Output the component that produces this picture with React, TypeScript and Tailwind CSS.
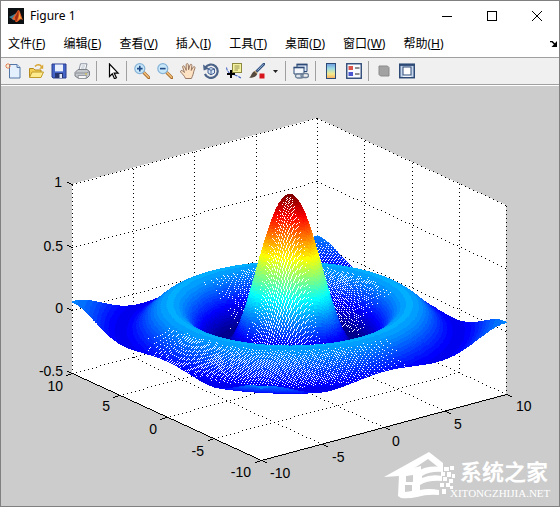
import React from "react";

const menus = [
  { label: "文件", key: "F" },
  { label: "编辑", key: "E" },
  { label: "查看", key: "V" },
  { label: "插入", key: "I" },
  { label: "工具", key: "T" },
  { label: "桌面", key: "D" },
  { label: "窗口", key: "W" },
  { label: "帮助", key: "H" },
];

/* ---------- toolbar icons, all on a 16x16 grid ---------- */

const NewIcon = () => (
  <>
    <path d="M4.5 1.5h7.5l3 3v10.5H4.5z" fill="#e4f0fd" stroke="#5577a8" />
    <path d="M12 1.5v3h3" fill="#cfe0f4" stroke="#5577a8" />
    <path d="M3 0v6M0 3h6M1 1l4 4M5 1L1 5" stroke="#e0703c" strokeWidth="0.9" />
    <circle cx="3" cy="3" r="1.2" fill="#fff3d0" />
  </>
);

const OpenIcon = () => (
  <>
    <path d="M1.5 14V5.5h4l1.5 1.5h6V14z" fill="#f3cf56" stroke="#b48a1c" />
    <path d="M1.5 14.5L4 9h11.5l-2.5 5.5z" fill="#fdeb8e" stroke="#c09a2a" />
    <path d="M7 3.5c2-2.3 5-2.3 6.500 0" fill="none" stroke="#d8a530" strokeWidth="1.5" />
    <path d="M15.2 1.5v4.200h-4z" fill="#d8a530" />
  </>
);

const SaveIcon = () => (
  <>
    <path d="M1 1h14v14H2l-1-1z" fill="#4564c8" stroke="#283d8c" />
    <rect x="4" y="1.5" width="8" height="6.5" fill="#e9f0fc" />
    <path d="M4 8.5h8" stroke="#7f9be0" />
    <rect x="4" y="10" width="8" height="5" fill="#27356f" />
    <rect x="8.5" y="11" width="2.5" height="4" fill="#dfe6f5" />
  </>
);

const PrintIcon = () => (
  <>
    <path d="M5 7L6.5 .8h6.500L11.5 7z" fill="#fff" stroke="#7d8694" strokeWidth="0.9" />
    <path d="M7.5 3h3.500M7 5h3.500" stroke="#9aa6b8" strokeWidth="0.8" />
    <path d="M1 9.500L4 6.500h9l2.500 2v4L13 15H4l-3-2z" fill="#c4c7cc" stroke="#7b7f86" />
    <path d="M1.5 10h11.500l2-1.500" fill="none" stroke="#8c9096" />
    <path d="M4 12.500h8.500l-.5 3H4.500z" fill="#f6f6f6" stroke="#85898f" strokeWidth="0.8" />
    <rect x="11" y="10.5" width="2" height="1" fill="#d8c23c" />
  </>
);

const PointerIcon = () => (
  <path
    d="M5.5 1v12.500l2.800-2.700 2.200 4.900 1.900-.9-2.200-4.700h3.900z"
    fill="#fff"
    stroke="#000"
    strokeWidth="1.2"
  />
);

const Magnifier = ({ plus }: { plus?: boolean }) => (
  <>
    <path d="M9.800 9.600l5 5" stroke="#a4692a" strokeWidth="3" strokeLinecap="round" />
    <path d="M9.800 9.400l4.800 4.800" stroke="#f0bd78" strokeWidth="1.6" strokeLinecap="round" />
    <circle cx="5.8" cy="5.6" r="5" fill="#c8e8fa" stroke="#86b2d6" strokeWidth="1.2" />
    <path d={plus ? "M3 5.600h5.600M5.800 2.800v5.600" : "M3 5.600h5.600"} stroke="#1f4a86" strokeWidth="1.6" />
  </>
);

const HandIcon = () => (
  <path
    d="M5.5 15.500C4.500 13 2.500 11 .6 9c-.5-1.400 1-2 2-1.100l1.900 1.600L2.600 4c0-1.400 1.600-1.600 2-.4l1.600 3.800L6.200 1.600c.2-1.400 1.900-1.300 2.100 0l.3 5.200L10 2c.5-1.200 2.100-.8 1.900.5l-.7 5 2-3.400c.8-1 2.100-.3 1.800.8-.9 2.300-1.500 4.400-1.900 6.400-.3 1.400-1 2.500-1.700 4.200z"
    fill="#fde3c4"
    stroke="#8e6c58"
    strokeWidth="0.9"
  />
);

const RotateIcon = () => (
  <>
    <path d="M2.300 4.700A6.700 6.700 0 1 1 1.900 11" fill="none" stroke="#4b6389" strokeWidth="2.2" />
    <path d="M0 1.500l.7 6 5.300-2z" fill="#4b6389" />
    <path d="M5 6l3-1.500L11.500 6v4L8 11.800 5 10z" fill="#dbe8f8" stroke="#38558a" strokeWidth="0.9" />
    <path d="M5 6l3 1.300L11.500 6M8 7.300v4.500" fill="none" stroke="#38558a" strokeWidth="0.9" />
  </>
);

const DataCursorIcon = () => (
  <>
    <rect x="6.5" y=".5" width="9" height="9" fill="#f6f3a0" stroke="#8c8840" />
    <path d="M8.500 3h5M8.500 5h5M8.500 7h3.500" stroke="#8b8648" strokeWidth="0.9" />
    <path
      d="M.5 4.500c.5 3 2 5.500 4.500 6.500s6 .8 10.500 4.500"
      fill="none"
      stroke="#3d5fc4"
      strokeWidth="1.1"
      strokeDasharray="3 1"
    />
    <path d="M5 7v8M1 11h8" stroke="#000" strokeWidth="2" />
  </>
);

const BrushIcon = () => (
  <>
    <path d="M15 1L7.500 8.500" stroke="#34527f" strokeWidth="2.6" strokeLinecap="round" />
    <path d="M14.500 1.200L8.500 7.500" stroke="#9fbbe0" strokeWidth="0.9" />
    <path d="M5.500 8l2.800 2.500c-.8 3-4 4.500-8.100 4.300C2.500 13 2.500 9.500 5.500 8z" fill="#56493f" />
    <path d="M5.800 8l2.400 2.300" stroke="#c8a878" strokeWidth="1.2" />
    <rect x="10.5" y="10.5" width="5" height="5" fill="#d8141c" />
  </>
);

const LinkIcon = () => (
  <>
    <path d="M4 1.500h10v7H4z" fill="#dce8f7" stroke="#2d4a77" />
    <path d="M3.500 1.500h11" stroke="#2d4a77" strokeWidth="1.8" />
    <path d="M1 4.500h10v6.500H1z" fill="#f4f8fd" stroke="#2d4a77" />
    <path d="M.5 4.500h11" stroke="#2d4a77" strokeWidth="1.6" />
    <rect x="2.5" y="11" width="7.5" height="4" rx="2" fill="#dfe6ee" stroke="#6c7f96" strokeWidth="1.3" />
    <rect x="8" y="10.5" width="7.5" height="4" rx="2" fill="none" stroke="#6c7f96" strokeWidth="1.3" />
  </>
);

const ColorbarIcon = () => (
  <>
    <defs>
      <linearGradient id="bar" x1="0" y1="0" x2="0" y2="1">
        <stop offset="0" stopColor="#6d9be0" />
        <stop offset="0.35" stopColor="#9fdce0" />
        <stop offset="0.7" stopColor="#f6e98a" />
        <stop offset="1" stopColor="#f3ab62" />
      </linearGradient>
    </defs>
    <rect x="3.5" y=".5" width="9" height="15" fill="url(#bar)" stroke="#2d4a77" />
  </>
);

const LegendIcon = () => (
  <>
    <rect x=".75" y=".75" width="14.5" height="14.5" fill="#f7faff" stroke="#2d4a77" strokeWidth="1.4" />
    <rect x="2.5" y="3" width="4.5" height="4" fill="#d9534a" />
    <rect x="2.5" y="9" width="4.5" height="4" fill="#4a56cf" />
    <path d="M9 5h4.500M9 11h4.500" stroke="#222" strokeWidth="1.2" />
  </>
);

const HidePlotIcon = () => (
  <path d="M3 3h8.500l1.500 1.500V13H4.500L3 11.500z" fill="#a2a2a2" stroke="#8b8b8b" />
);

const ShowPlotIcon = () => (
  <>
    <rect x=".75" y="1.2" width="14.5" height="13.5" fill="#c6d6ec" stroke="#2d4a77" strokeWidth="1.5" />
    <path d="M1 2h14" stroke="#2d4a77" strokeWidth="1.8" />
    <rect x="4" y="4" width="8" height="8" fill="#fff" stroke="#2d4a77" />
    <path d="M4 13.300h8" stroke="#fff" />
  </>
);

const toolGroups = [
  [
    { name: "新建图窗", icon: <NewIcon /> },
    { name: "打开文件", icon: <OpenIcon /> },
    { name: "保存图窗", icon: <SaveIcon /> },
    { name: "打印图窗", icon: <PrintIcon /> },
  ],
  [{ name: "编辑绘图", icon: <PointerIcon /> }],
  [
    { name: "放大", icon: <Magnifier plus /> },
    { name: "缩小", icon: <Magnifier /> },
    { name: "平移", icon: <HandIcon /> },
    { name: "三维旋转", icon: <RotateIcon /> },
    { name: "数据游标", icon: <DataCursorIcon /> },
    { name: "刷亮", icon: <BrushIcon />, menu: true },
  ],
  [{ name: "链接绘图", icon: <LinkIcon /> }],
  [
    { name: "插入颜色栏", icon: <ColorbarIcon /> },
    { name: "插入图例", icon: <LegendIcon /> },
  ],
  [
    { name: "隐藏绘图工具", icon: <HidePlotIcon /> },
    { name: "显示绘图工具", icon: <ShowPlotIcon /> },
  ],
];

/* ---------- 3-D plot ---------- */

const W = 558;
const H = 420;
const STEPS = 288;
const Z_MIN = -0.2172;

type Point = [number, number];

// orthographic view, azimuth -37.5
function project(x: number, y: number, z: number): Point {
  return [
    Math.round(260 + (x + 10) * 12.27 - (y + 10) * 9.467),
    Math.round(374 - (x + 10) * 3.3 - (y + 10) * 4.33 - (z + 0.5) * 126.3),
  ];
}

function walk([x0, y0]: Point, [x1, y1]: Point, plot: (x: number, y: number, n: number) => void) {
  const n = Math.max(Math.abs(x1 - x0), Math.abs(y1 - y0));
  for (let k = 0; k <= n; k++) {
    const t = n ? k / n : 0;
    plot(Math.round(x0 + (x1 - x0) * t), Math.round(y0 + (y1 - y0) * t), k);
  }
}

function inside(px: number, py: number, quad: Point[]) {
  let hit = false;
  for (let a = 0, b = 3; a < 4; b = a++) {
    const [ax, ay] = quad[a];
    const [bx, by] = quad[b];
    if (ay > py !== by > py && px < ((bx - ax) * (py - ay)) / (by - ay) + ax) hit = !hit;
  }
  return hit;
}

function jet(i: number) {
  const v = (i + 1) / 64;
  const ch = (c: number) =>
    Math.round(255 * Math.max(0, Math.min(1, 1.5 - Math.abs(4 * v - c))));
  return `rgb(${ch(3)},${ch(2)},${ch(1)})`;
}

// mesh of sin(r)/r painted back to front, returned as one path per colour
function buildSurface() {
  const WHITE = 65;
  const buf = new Uint8Array(W * H);
  const pts: Point[][] = [];
  const col: number[][] = [];
  for (let i = 0; i <= STEPS; i++) {
    pts.push([]);
    col.push([]);
    for (let j = 0; j <= STEPS; j++) {
      const x = -10 + (20 * i) / STEPS;
      const y = -10 + (20 * j) / STEPS;
      const r = Math.hypot(x, y) || 1e-9;
      const z = Math.sin(r) / r;
      pts[i].push(project(x, y, z));
      col[i].push(1 + Math.max(0, Math.min(63, Math.floor(((z - Z_MIN) / (1 - Z_MIN)) * 64))));
    }
  }
  for (let i = STEPS - 1; i >= 0; i--) {
    for (let j = STEPS - 1; j >= 0; j--) {
      const quad = [pts[i][j], pts[i + 1][j], pts[i + 1][j + 1], pts[i][j + 1]];
      const xs = quad.map((p) => p[0]);
      const ys = quad.map((p) => p[1]);
      for (let y = Math.min(...ys); y <= Math.max(...ys); y++) {
        for (let x = Math.min(...xs); x <= Math.max(...xs); x++) {
          if (inside(x, y, quad)) buf[y * W + x] = WHITE;
        }
      }
      for (let k = 0; k < 4; k++) {
        walk(quad[k], quad[(k + 1) % 4], (x, y) => {
          buf[y * W + x] = col[i][j];
        });
      }
    }
  }
  const paths: string[] = Array(66).fill("");
  for (let y = 0; y < H; y++) {
    for (let x = 0; x < W; ) {
      const c = buf[y * W + x];
      let end = x + 1;
      while (end < W && buf[y * W + end] === c) end++;
      if (c) paths[c] += `M${x} ${y}h${end - x}v1h${x - end}z`;
      x = end;
    }
  }
  return paths
    .map((d, c) => ({ d, fill: c === WHITE ? "#fff" : jet(c - 1) }))
    .filter((p) => p.d);
}

function buildGrid() {
  let d = "";
  const dots = (a: Point, b: Point) =>
    walk(a, b, (x, y, k) => {
      if (k % 4 === 0) d += `M${x} ${y}h1v1h-1z`;
    });
  for (const v of [-10, -5, 0, 5, 10]) {
    if (v > -10) {
      dots(project(v, -10, -0.5), project(v, 10, -0.5));
      dots(project(-10, v, -0.5), project(10, v, -0.5));
    }
    dots(project(v, 10, -0.5), project(v, 10, 1));
    if (v < 10) dots(project(10, v, -0.5), project(10, v, 1));
  }
  for (const z of [0, 0.5, 1]) {
    dots(project(-10, 10, z), project(10, 10, z));
    dots(project(10, 10, z), project(10, -10, z));
  }
  return d;
}

function buildAxes() {
  let d = "";
  const line = (a: Point, b: Point) =>
    walk(a, b, (x, y) => {
      d += `M${x} ${y}h1v1h-1z`;
    });
  line(project(-10, -10, -0.5), project(10, -10, -0.5));
  line(project(-10, -10, -0.5), project(-10, 10, -0.5));
  for (const v of [-10, -5, 0, 5, 10]) {
    const [ax, ay] = project(v, -10, -0.5);
    line([ax, ay], [ax + 5, ay + 2]);
    const [bx, by] = project(-10, v, -0.5);
    line([bx, by], [bx - 6, by + 2]);
  }
  for (const z of [-0.5, 0, 0.5, 1]) {
    const [x, y] = project(-10, 10, z);
    line([x, y], [x - 5, y - 2]);
  }
  return d;
}

const surface = buildSurface();
const gridDots = buildGrid();
const axisLines = buildAxes();

const box = [
  project(-10, 10, 1),
  project(10, 10, 1),
  project(10, -10, 1),
  project(10, -10, -0.5),
  project(-10, -10, -0.5),
  project(-10, 10, -0.5),
]
  .map((p) => p.join(","))
  .join(" ");

const leftLabels = [
  { text: "1", x: 61, y: 101 },
  { text: "0.5", x: 62, y: 165 },
  { text: "0", x: 62, y: 227 },
  { text: "-0.5", x: 62, y: 290 },
  { text: "10", x: 62, y: 305 },
  { text: "5", x: 109, y: 325 },
  { text: "0", x: 156, y: 348 },
  { text: "-5", x: 203, y: 370 },
  { text: "-10", x: 250, y: 391 },
];

const rightLabels = [
  { text: "-10", x: 269, y: 392 },
  { text: "-5", x: 331, y: 376 },
  { text: "0", x: 391, y: 360 },
  { text: "5", x: 453, y: 343 },
  { text: "10", x: 515, y: 325 },
];

function Watermark() {
  return (
    <g fill="#fff">
      <path d="M383 391L428 366 442 377V381H437L427 373 412 383 406 390H398z" />
      <path
        fillRule="evenodd"
        d="M398 389L412 382 420 380V389Q416 397 415 405L418 409 416 411Q407 413 400 412L397 410zM405 390V396H412V389zM404 399V406L411 405V399z"
      />
      <path d="M416 386Q425 379 442 381V386Q429 385 421 390V392Q430 388 441 390V395Q427 394 419 399V404Q428 402 438 404V409Q426 408 416 411L412 405z" />
      <path d="M443 381h5v4h-5zM449 380h4v4h-4zM440 386h4v4h-4zM446 386h4v5h-4zM451 388h3v4h-3zM442 391h4v4h-4zM448 393h4v4h-4zM439 397h4v4h-4zM445 397h4v4h-4zM441 403h4v5h-4zM449 400h3v3h-3z" />
      <text x="459" y="394" className="font-['Noto_Sans_CJK_SC',sans-serif] text-[22px] font-bold">
        系统之家
      </text>
      <text x="449" y="411" className="font-['Liberation_Serif',serif] text-[11px]">
        XITONGZHIJIA.NET
      </text>
    </g>
  );
}

function Plot() {
  return (
    <svg viewBox={`0 0 ${W} ${H}`} className="block w-full" role="img" aria-label="sin(r)/r">
      <g shapeRendering="crispEdges">
        <polygon points={box} fill="#fff" />
        <path d={gridDots} />
        {surface.map((p) => (
          <path key={p.fill} d={p.d} fill={p.fill} />
        ))}
        <path d={axisLines} />
      </g>
      <g className="font-['Liberation_Sans',sans-serif] text-[14px]">
        {leftLabels.map((l) => (
          <text key={`${l.x}-${l.y}`} x={l.x} y={l.y} textAnchor="end">
            {l.text}
          </text>
        ))}
        {rightLabels.map((l) => (
          <text key={`${l.x}-${l.y}`} x={l.x} y={l.y}>
            {l.text}
          </text>
        ))}
      </g>
      <Watermark />
    </svg>
  );
}

function TitleBar() {
  return (
    <header className="flex h-[30px] items-center pl-[7px]">
      <svg viewBox="0 0 16 16" className="h-4 w-4">
        <rect width="16" height="16" fill="#0c1013" />
        <path d="M1 9l4-2 2.500-1.500L9 8l-3.500 4.500L4 11z" fill="#3f7f96" />
        <path d="M4 11l3-4.500C8.500 5 9.500 2 10.500 2c1.500 0 2.500 6 4.500 10-1.500-.8-2.500-1-3.500 0S9 14.500 7.500 14c0-1.500-1-2.500-3.500-3z" fill="#e2602a" />
        <path d="M10.500 2c-1 2-1.500 4.500-3.500 7l.5 5c1.500-1 2-4 3-6z" fill="#a02c12" />
        <path d="M11 4c.8 2 1 5 3 7-2-1-3 0-4 1 .8-2 1-5 1-8z" fill="#f7a63c" />
      </svg>
      <h1 className="ml-[6px] flex-1 text-xs text-black">Figure 1</h1>
      <button aria-label="最小化" className="flex h-full w-[45px] items-center justify-center">
        <svg viewBox="0 0 10 10" className="h-[10px] w-[10px]">
          <path d="M0 5.500h10" stroke="#000" />
        </svg>
      </button>
      <button aria-label="最大化" className="flex h-full w-[45px] items-center justify-center">
        <svg viewBox="0 0 10 10" className="h-[10px] w-[10px]">
          <rect x=".5" y=".5" width="9" height="9" fill="none" stroke="#000" />
        </svg>
      </button>
      <button aria-label="关闭" className="flex h-full w-[45px] items-center justify-center">
        <svg viewBox="0 0 10 10" className="h-[10px] w-[10px]">
          <path d="M0 0l10 10M10 0L0 10" stroke="#000" />
        </svg>
      </button>
    </header>
  );
}

function MenuBar() {
  return (
    <nav className="flex h-[26px] items-center gap-[18px] pl-[7px] pr-[2px]">
      {menus.map((menu) => (
        <button key={menu.key} className="whitespace-nowrap text-xs text-black">
          {menu.label}(<span className="underline">{menu.key}</span>)
        </button>
      ))}
      <button aria-label="停靠图窗" className="ml-auto">
        <svg viewBox="0 0 7 6" className="h-[6px] w-[7px]">
          <path d="M0 .5h2L5 3.500" fill="none" stroke="#000" strokeWidth="1.5" />
          <path d="M7 0v6H1.500z" fill="#000" />
        </svg>
      </button>
    </nav>
  );
}

function Toolbar() {
  return (
    <div className="border-b border-white">
      <div
        role="toolbar"
        className="flex h-7 items-center border-y border-[#a0a0a0] bg-[#f0f0f0]"
      >
        {toolGroups.map((group, i) => (
          <React.Fragment key={group[0].name}>
            {i > 0 && (
              <div className="flex w-[7px] justify-center">
                <div className="h-5 w-px bg-[#a0a0a0]" />
              </div>
            )}
            {group.map((tool) => (
              <React.Fragment key={tool.name}>
                <button
                  aria-label={tool.name}
                  className="flex h-6 w-[23px] items-center justify-center"
                >
                  <svg viewBox="0 0 16 16" className="h-4 w-4" fill="none">
                    {tool.icon}
                  </svg>
                </button>
                {"menu" in tool && (
                  <button aria-label="刷亮选项" className="flex h-6 w-[14px] items-center justify-center">
                    <svg viewBox="0 0 5 3" className="h-[3px] w-[5px]">
                      <path d="M0 0h5L2.500 3z" fill="#222" />
                    </svg>
                  </button>
                )}
              </React.Fragment>
            ))}
          </React.Fragment>
        ))}
      </div>
    </div>
  );
}

export default function App() {
  return (
    <div className="flex min-h-screen flex-col border border-[#808080] bg-white font-['Noto_Sans','Noto_Sans_CJK_SC',sans-serif]">
      <TitleBar />
      <MenuBar />
      <Toolbar />
      <main className="flex-1 bg-[#cccccc]">
        <Plot />
      </main>
    </div>
  );
}
